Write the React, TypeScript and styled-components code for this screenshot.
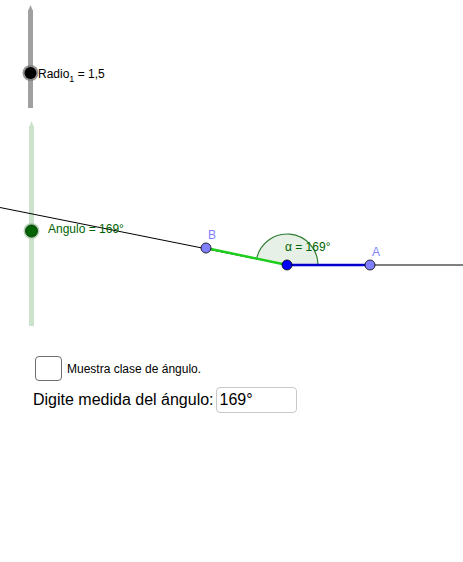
import React from "react";
import styled, { createGlobalStyle } from "styled-components";

const Global = createGlobalStyle`
  html, body { margin: 0; padding: 0; background: #fff; }
  body { font-family: "Liberation Sans", Arial, sans-serif; }
`;

const Page = styled.div`
  width: 463px;
  height: 562px;
  background: #ffffff;
  overflow: hidden;
  display: flex;
  flex-direction: column;
`;

const Canvas = styled.svg`
  display: block;
  width: 463px;
  height: 340px;
  font-family: "Liberation Sans", Arial, sans-serif;
`;

const Controls = styled.div`
  display: flex;
  flex-direction: column;
  gap: 6px;
  padding: 16px 0 0 33px;
`;

const CheckRow = styled.label`
  display: flex;
  align-items: center;
  gap: 5px;
  margin-left: 2px;
  font-size: 12px;
  color: #000;
`;

const CheckBox = styled.span`
  width: 25px;
  height: 23px;
  border: 1px solid #6e6e6e;
  border-radius: 4px;
  background: #fff;
  box-sizing: content-box;
`;

const InputRow = styled.div`
  display: flex;
  align-items: center;
  gap: 2px;
  font-size: 16px;
  color: #000;
`;

const InputBox = styled.div`
  width: 76px;
  height: 24px;
  border: 1px solid #c8c8c8;
  border-radius: 4px;
  padding-left: 3px;
  display: flex;
  align-items: center;
  font-size: 16px;
`;

const vx = 287;
const vy = 265;
const r = 31;
const ang = (169 * Math.PI) / 180;
const ax = vx + r * Math.cos(ang);
const ay = vy - r * Math.sin(ang);

export default function App() {
  return (
    <Page>
      <Global />
      <Canvas viewBox="0 0 463 340">
        {/* Radio slider */}
        <line x1={30.5} y1={10} x2={30.5} y2={108} stroke="#a0a0a0" strokeWidth={5} />
        <polygon points="28,11 30.5,5 33,11" fill="#a0a0a0" />
        <circle cx={30.5} cy={73} r={8} fill="#7a7a7a" opacity={0.8} />
        <circle cx={30.5} cy={73} r={6} fill="#000" />
        <text x={38} y={78} fontSize={12} fill="#000">
          Radio
          <tspan fontSize={9} dy={4}>1</tspan>
          <tspan dy={-4}> = 1,5</tspan>
        </text>

        {/* Angulo slider */}
        <line x1={31.5} y1={126} x2={31.5} y2={326} stroke="#cde2cd" strokeWidth={5} />
        <polygon points="29,127 31.5,121 34,127" fill="#cde2cd" />

        {/* Rays */}
        <line x1={0} y1={207.5} x2={vx} y2={vy} stroke="#000" strokeWidth={1} />
        <line x1={vx} y1={vy} x2={463} y2={vy} stroke="#000" strokeWidth={1} />

        {/* Angle sector */}
        <path
          d={`M ${vx} ${vy} L ${vx + r} ${vy} A ${r} ${r} 0 0 0 ${ax} ${ay} Z`}
          fill="#e6f0e6"
          stroke="none"
        />
        <path
          d={`M ${vx + r} ${vy} A ${r} ${r} 0 0 0 ${ax} ${ay}`}
          fill="none"
          stroke="#2e7d32"
          strokeWidth={1.2}
        />

        {/* Segments */}
        <line x1={206} y1={248} x2={vx} y2={vy} stroke="#1ecf1e" strokeWidth={2.5} />
        <line x1={vx} y1={vy} x2={370} y2={vy} stroke="#0000cc" strokeWidth={2.5} />

        {/* Angulo knob & label */}
        <circle cx={31.5} cy={231} r={8} fill="#9fc79f" opacity={0.8} />
        <circle cx={31.5} cy={231} r={6} fill="#006400" stroke="#003000" strokeWidth={0.8} />
        <text x={48} y={233} fontSize={12} fill="#006400">Angulo = 169°</text>

        {/* Angle label */}
        <text x={285} y={251} fontSize={12} fill="#006400">α = 169°</text>

        {/* Points */}
        <circle cx={206} cy={248} r={5} fill="#7f7fff" stroke="#000" strokeWidth={0.8} />
        <circle cx={370} cy={vy} r={5} fill="#7f7fff" stroke="#000" strokeWidth={0.8} />
        <circle cx={vx} cy={vy} r={5} fill="#0000ff" stroke="#000" strokeWidth={0.8} />

        <text x={208} y={239} fontSize={12} fill="#7f7fff">B</text>
        <text x={372} y={256} fontSize={12} fill="#7f7fff">A</text>
      </Canvas>
      <Controls>
        <CheckRow>
          <CheckBox />
          Muestra clase de ángulo.
        </CheckRow>
        <InputRow>
          Digite medida del ángulo:
          <InputBox>169°</InputBox>
        </InputRow>
      </Controls>
    </Page>
  );
}
